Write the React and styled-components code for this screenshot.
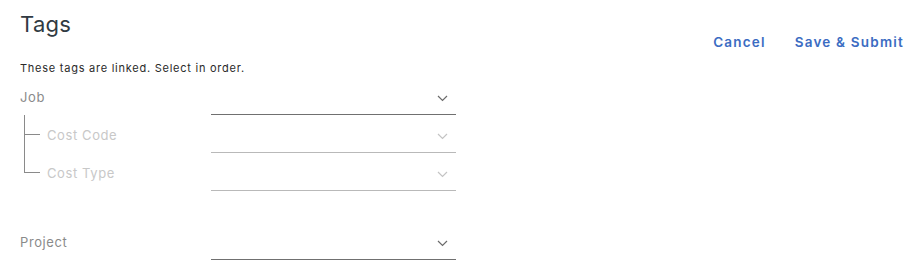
import React from 'react'
import styled, { createGlobalStyle } from 'styled-components'

const GlobalStyle = createGlobalStyle`
    body {
        margin: 0;
        background: #ffffff;
        font-family: Inter, "Noto Sans", sans-serif;
    }
`

function Chevron({ $disabled }) {
    return (
        <svg width="11" height="7" viewBox="0 0 11 7">
            <path d="M1 1 L5.5 5.5 L10 1" fill="none" stroke={$disabled ? '#c4c4c4' : '#6b6b6b'} strokeWidth="1.2" />
        </svg>
    )
}

const fields = [
    { label: 'Job', level: 0 },
    { label: 'Cost Code', level: 1 },
    { label: 'Cost Type', level: 1, last: true },
]

function App() {
    return (
        <StPage>
            <GlobalStyle />
            <StHeader>
                <div>
                    <StTitle>Tags</StTitle>
                    <StNote>These tags are linked. Select in order.</StNote>
                </div>
                <StActions>
                    <StLinkButton>Cancel</StLinkButton>
                    <StLinkButton>Save &amp; Submit</StLinkButton>
                </StActions>
            </StHeader>

            <StGroup>
                {fields.map((f) => (
                    <StRow key={f.label}>
                        <StLabel $child={f.level > 0} $last={f.last} $disabled={f.level > 0}>{f.label}</StLabel>
                        <StSelect $disabled={f.level > 0}>
                            <Chevron $disabled={f.level > 0} />
                        </StSelect>
                    </StRow>
                ))}
            </StGroup>

            <StGroup $spaced>
                <StRow>
                    <StLabel>Project</StLabel>
                    <StSelect>
                        <Chevron />
                    </StSelect>
                </StRow>
            </StGroup>
        </StPage>
    )
}

export default App

const StPage = styled.div`
    padding: 0 13px 0 20px;
    width: 917px;
    box-sizing: border-box;
`

const StHeader = styled.div`
    display: flex;
    justify-content: space-between;
    align-items: flex-start;
`

const StTitle = styled.h1`
    margin: 11px 0 0;
    font-size: 22px;
    line-height: 26px;
    font-weight: 400;
    letter-spacing: 0.3px;
    color: #313a42;
`

const StNote = styled.p`
    margin: 24px 0 0;
    font-size: 11px;
    line-height: 14px;
    letter-spacing: 0.75px;
    color: #2a2a2a;
`

const StActions = styled.div`
    display: flex;
    gap: 29px;
    margin-top: 34px;
`

const StLinkButton = styled.button`
    background: none;
    border: none;
    padding: 0;
    font-family: inherit;
    font-size: 13.5px;
    line-height: 16px;
    font-weight: 600;
    letter-spacing: 1.2px;
    color: #3b6cc2;
    cursor: pointer;
`

const StGroup = styled.div`
    margin-top: ${(p) => (p.$spaced ? '31px' : '2px')};
`

const StRow = styled.div`
    display: flex;
    height: 38px;
`

const StLabel = styled.div`
    position: relative;
    width: 191px;
    box-sizing: border-box;
    padding-left: ${(p) => (p.$child ? '27px' : '0')};
    display: flex;
    align-items: center;
    padding-top: 1px;
    font-size: 13px;
    letter-spacing: 0.6px;
    color: ${(p) => (p.$disabled ? '#c8c8c8' : '#8a8a8a')};

    &::before {
        content: '';
        display: ${(p) => (p.$child ? 'block' : 'none')};
        position: absolute;
        left: 4px;
        top: 0;
        width: 1px;
        height: ${(p) => (p.$last ? '20px' : '100%')};
        background: #8a8a8a;
    }

    &::after {
        content: '';
        display: ${(p) => (p.$child ? 'block' : 'none')};
        position: absolute;
        left: 4px;
        top: 19px;
        width: 16px;
        height: 1px;
        background: #8a8a8a;
    }
`

const StSelect = styled.div`
    width: 245px;
    box-sizing: border-box;
    display: flex;
    align-items: center;
    justify-content: flex-end;
    padding: 6px 8px 0 0;
    border-bottom: 1px solid ${(p) => (p.$disabled ? '#b9b9b9' : '#707070')};
`
